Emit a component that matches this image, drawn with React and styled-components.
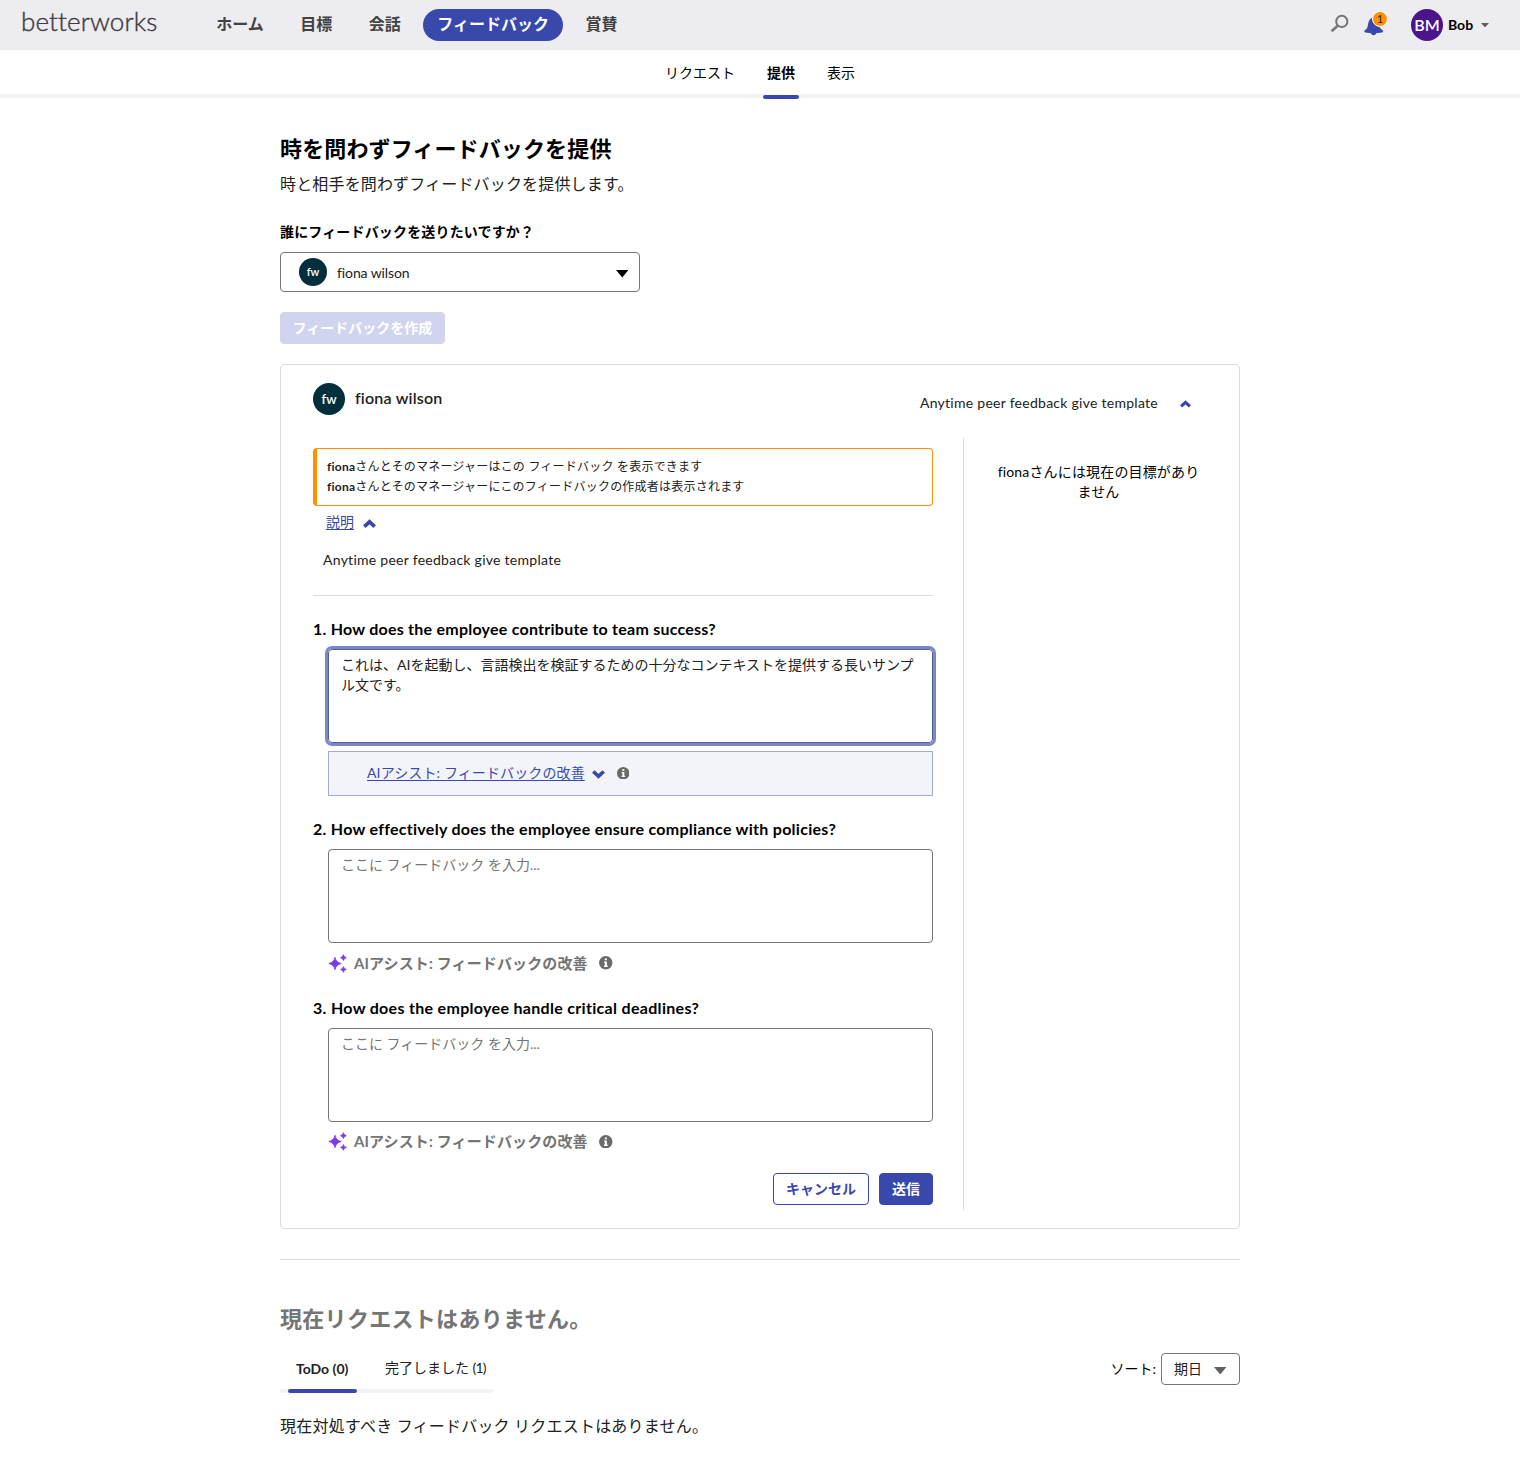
import React from "react";
import styled, { createGlobalStyle, css } from "styled-components";

const Global = createGlobalStyle`
  *, *::before, *::after { box-sizing: border-box; }
  body {
    margin: 0;
    background: #fff;
    color: #212121;
    font-family: Lato, "Noto Sans CJK JP", sans-serif;
    font-size: 14px;
    line-height: 20px;
  }
  h1, h2, p { margin: 0; }
`;

const Page = styled.div`
  display: flex;
  flex-direction: column;
  height: 1467px;
  overflow: hidden;
`;

/* ---------- header ---------- */

const Header = styled.header`
  display: flex;
  height: 50px;
  padding: 0 31px 0 21px;
  background: #edecf1;
`;

const Logo = styled.div`
  width: 181.2px;
  padding-top: 6px;
  font-size: 26px;
  line-height: 30px;
  font-weight: 300;
  letter-spacing: 0.1px;
  color: #3c3c3c;
  -webkit-text-stroke: 0.4px #3c3c3c;
`;

const Nav = styled.nav`
  display: flex;
  flex: 1;
  gap: 8.5px;
  padding-top: 9px;
`;

const NavItem = styled.a`
  height: 32px;
  padding: 0 14px;
  border-radius: 16px;
  font-size: 16px;
  line-height: 30px;
  font-weight: 700;
  color: ${(p) => (p.$active ? "#fff" : "#424242")};
  background: ${(p) => (p.$active ? "#3949ab" : "transparent")};
`;

const Tools = styled.div`
  display: flex;
  align-items: flex-start;
`;

const SearchIcon = styled.svg`
  margin: 14px 15px 0 0;
`;

const Bell = styled.div`
  position: relative;
  height: 24px;
  margin: 15px 27px 0 0;
  svg { display: block; }
`;

const Badge = styled.span`
  position: absolute;
  left: 8px;
  top: -4px;
  width: 16px;
  height: 16px;
  border: 1px solid #fff;
  border-radius: 50%;
  background: #ff9100;
  color: #212121;
  font-size: 10.5px;
  line-height: 14px;
  text-align: center;
`;

const Avatar = styled.span`
  display: block;
  flex: none;
  width: ${(p) => p.$size}px;
  height: ${(p) => p.$size}px;
  border-radius: 50%;
  background: ${(p) => p.$bg};
  color: #fff;
  font-size: ${(p) => p.$font}px;
  line-height: ${(p) => p.$size}px;
  font-weight: 600;
  text-align: center;
`;

const User = styled.div`
  display: flex;
  align-items: center;
  height: 50px;
`;

const UserName = styled.span`
  width: 38px;
  padding: 0 0 1px 5px;
  font-weight: 700;
  color: #000;
`;

const SubNav = styled.nav`
  display: flex;
  justify-content: center;
  gap: 24px;
  height: 48px;
  border-bottom: 4px solid #f4f4f4;
`;

const SubTab = styled.a`
  position: relative;
  padding: 13px 4px 0;
  color: #000;
  font-weight: ${(p) => (p.$active ? 700 : 400)};
  ${(p) =>
    p.$active &&
    css`
      &::after {
        content: "";
        position: absolute;
        left: 0;
        right: 0;
        top: 44.5px;
        height: 4px;
        border-radius: 2px;
        background: #3949ab;
      }
    `}
`;

/* ---------- intro ---------- */

const Main = styled.main`
  display: flex;
  flex-direction: column;
  width: 960px;
  margin: 0 auto;
  padding-top: 36px;
`;

const Title = styled.h1`
  font-size: 22px;
  line-height: 30px;
  letter-spacing: 0.13px;
  color: #000;
`;

const Lead = styled.p`
  margin-top: 8px;
  font-size: 16px;
  line-height: 24px;
  letter-spacing: 0.16px;
`;

const FieldLabel = styled.label`
  margin-top: 26px;
  line-height: 20px;
  font-weight: 700;
  letter-spacing: 0.16px;
  color: #000;
`;

const Person = styled.div`
  display: flex;
  align-items: center;
  width: 360px;
  height: 40px;
  margin-top: 10px;
  padding: 0 11px 0 18px;
  border: 1px solid #757575;
  border-radius: 4px;
`;

const PersonName = styled.span`
  flex: 1;
  padding: 2px 0 0 10px;
  letter-spacing: -0.1px;
`;

const Button = styled.button`
  height: 32px;
  padding: 0 ${(p) => (p.$disabled ? 11.5 : 12)}px 1px;
  border: 1px solid ${(p) => (p.$disabled ? "#d1d4ee" : "#3949ab")};
  border-radius: 4px;
  background: ${(p) => (p.$disabled ? "#d1d4ee" : p.$primary ? "#3949ab" : "#fff")};
  color: ${(p) => (p.$disabled || p.$primary ? "#fff" : "#3949ab")};
  font: inherit;
  font-weight: 700;
`;

const CreateRow = styled.div`
  display: flex;
  margin: 20px 0;
`;

/* ---------- card ---------- */

const Card = styled.section`
  height: 865px;
  border: 1px solid #dcdbe3;
  border-radius: 4px;
`;

const CardHead = styled.div`
  display: flex;
  height: 73px;
  padding: 18px 48px 0 32px;
`;

const CardName = styled.h2`
  flex: 1;
  padding: 5px 0 0 10px;
  font-size: 16px;
  line-height: 20px;
  font-weight: 600;
  letter-spacing: 0.2px;
`;

const TemplateName = styled.span`
  padding-top: 10px;
  letter-spacing: 0.27px;
`;

const HeadChevron = styled.svg`
  margin: 17px 0 0 22px;
`;

const CardBody = styled.div`
  display: flex;
  height: 772px;
  padding-left: 32px;
`;

const FormColumn = styled.div`
  display: flex;
  flex-direction: column;
  width: 620px;
  padding-top: 10px;
`;

const Goals = styled.aside`
  width: 270px;
  margin-left: 30px;
  padding: 24px 30px 0;
  border-left: 1px solid #dcdbe3;
  color: #000;
  letter-spacing: 0.16px;
  text-align: center;
`;

const Notice = styled.div`
  height: 58px;
  padding: 8px 10px;
  border: 1px solid #ff9100;
  border-left-width: 4px;
  border-radius: 4px;
  font-size: 12px;
  letter-spacing: 0.22px;
`;

const DescriptionToggle = styled.div`
  display: flex;
  align-items: center;
  gap: 9px;
  height: 20px;
  margin: 6px 0 0 13px;
  svg { margin-top: 3px; }
`;

const Link = styled.a`
  color: #3949ab;
  text-decoration: underline;
  text-underline-offset: 2px;
  text-decoration-thickness: 1px;
  letter-spacing: ${(p) => p.$ls || 0}px;
`;

const Description = styled.p`
  height: 46px;
  margin: 18px 0 23px;
  padding: 0 10px;
  border-bottom: 1px solid #dcdbe3;
  letter-spacing: 0.27px;
`;

const Question = styled.div`
  height: 20px;
  font-size: 16px;
  font-weight: 700;
  color: #000;
  letter-spacing: ${(p) => p.$ls || 0}px;
`;

const Answer = styled.div`
  height: 94px;
  margin: 10px 0 0 15px;
  padding: 5px 12px;
  border: 1px solid #757575;
  border-radius: 4px;
  color: ${(p) => (p.$filled ? "#212121" : "#757575")};
  box-shadow: ${(p) => (p.$focused ? "0 0 0 3px #7986cb" : "none")};
  border-color: ${(p) => (p.$focused ? "#5a608c" : "#757575")};
`;

const AssistPanel = styled.div`
  display: flex;
  align-items: center;
  height: 45px;
  margin: 8px 0 23px 15px;
  padding: 0 38px 1px;
  border: 1px solid #9fa8da;
  background: #f3f4f9;
`;

const PanelChevron = styled.svg`
  margin: 3px 12px 0 7px;
`;

const AssistRow = styled.div`
  display: flex;
  align-items: center;
  height: 20px;
  margin: 10px 0 ${(p) => p.$after}px 15px;
  color: #757575;
  font-size: 15px;
  font-weight: 700;
`;

const AssistLabel = styled.span`
  width: 252px;
  padding: 0 0 1px 7px;
  letter-spacing: 0.12px;
`;

const Actions = styled.div`
  display: flex;
  justify-content: flex-end;
  gap: 10px;
`;

/* ---------- requests ---------- */

const Requests = styled.section`
  margin-top: 30px;
  border-top: 1px solid #dcdbe3;
`;

const RequestsTitle = styled.h2`
  margin-top: 44px;
  font-size: 22px;
  line-height: 30px;
  letter-spacing: 0.3px;
  color: #757575;
`;

const Toolbar = styled.div`
  display: flex;
  justify-content: space-between;
  height: 40px;
  margin-top: 19px;
`;

const Tabs = styled.div`
  display: flex;
  width: 213px;
  padding-left: 8px;
  gap: 20px;
  border-bottom: 4px solid #f4f4f4;
  border-radius: 2px;
`;

const Tab = styled.a`
  position: relative;
  flex: none;
  height: 36px;
  padding: ${(p) => (p.$active ? 6 : 5)}px 8px 0;
  white-space: nowrap;
  font-weight: ${(p) => (p.$active ? 700 : 400)};
  ${(p) =>
    p.$active &&
    css`
      width: 69px;
      &::after {
        content: "";
        position: absolute;
        left: 0;
        right: 0;
        top: 36px;
        height: 4px;
        border-radius: 2px;
        background: #3949ab;
      }
    `}
`;

const Count = styled.span`
  letter-spacing: -0.9px;
`;

const Sort = styled.div`
  display: flex;
  align-items: center;
  gap: 5px;
  height: 32px;
  padding-bottom: 0;
  color: #000;
`;

const SortLabel = styled.span`
  padding-bottom: 1px;
`;

const SortSelect = styled.div`
  display: flex;
  align-items: center;
  justify-content: space-between;
  width: 79px;
  height: 32px;
  padding: 0 13px 1px 12px;
  border: 1px solid #757575;
  border-radius: 4px;
  color: #212121;
  svg { margin-top: 4px; }
`;

const EmptyText = styled.p`
  margin-top: 21px;
  font-size: 16px;
  line-height: 24px;
  letter-spacing: 0.21px;
`;

/* ---------- icons ---------- */

const CaretSvg = styled.svg`
  margin-top: ${(p) => p.$drop || 0}px;
`;

const Caret = ({ w, h, color, drop }) => (
  <CaretSvg $drop={drop} width={w} height={h} viewBox="0 0 12 7" preserveAspectRatio="none">
    <path d="M0 0H12L6 7Z" fill={color} />
  </CaretSvg>
);

const Chevron = ({ as: As = "svg", w = 12, up }) => (
  <As width={w} height={w * 0.7} viewBox="0 0 12 8.4">
    <path
      d={up ? "M1.2 7 6 2.6 10.8 7" : "M1.2 1.4 6 5.8 10.8 1.4"}
      fill="none"
      stroke="#3949ab"
      strokeWidth="3.4"
    />
  </As>
);

const Info = ({ size }) => (
  <svg width={size} height={size} viewBox="0 0 14 14">
    <circle cx="7" cy="7" r="7" fill="#6b6b6b" />
    <path d="M6 2.5h2.200v2H6zM5.200 5.700h3v4.200H9v1.400H5.200V9.900H6V7.100h-.8z" fill="#fff" />
  </svg>
);

const Sparkles = () => (
  <svg width="19" height="19" viewBox="0 0 19 19" fill="#7c3aed">
    <path d="M7 3.200Q8 8.200 13.200 9.500Q8 10.800 7 15.800Q6 10.800 .8 9.500Q6 8.200 7 3.200Z" stroke="#7c3aed" strokeWidth=".7" strokeLinejoin="round" />
    <path d="M15.400 .6Q16 3 18.500 3.700Q16 4.400 15.400 6.800Q14.800 4.400 12.300 3.700Q14.800 3 15.400 .6Z" stroke="#7c3aed" strokeWidth=".5" />
    <path d="M15.400 12.400Q16 14.700 18.500 15.400Q16 16.100 15.400 18.400Q14.800 16.100 12.300 15.400Q14.800 14.700 15.400 12.400Z" stroke="#7c3aed" strokeWidth=".5" />
  </svg>
);

const nav = ["ホーム", "目標", "会話", "フィードバック", "賞賛"];

export default function App() {
  return (
    <Page>
      <Global />
      <Header>
        <Logo>betterworks</Logo>
        <Nav>
          {nav.map((n) => (
            <NavItem key={n} $active={n === "フィードバック"}>{n}</NavItem>
          ))}
        </Nav>
        <Tools>
          <SearchIcon width="19" height="19" viewBox="0 0 19 19" fill="none" stroke="#757575">
            <circle cx="11.8" cy="7.4" r="5.6" strokeWidth="2" />
            <path d="M7.8 11.6 1.6 17.3" strokeWidth="2.6" />
          </SearchIcon>
          <Bell>
            <svg width="20" height="22" viewBox="0 0 20 22" fill="#3949ab">
              <path d="M9.5 2.4C13 2.7 15 5 15.1 8.5c.1 3.500.9 5 3.500 6.800.8.600.600 1.900-.4 2.300l-8.700.9-8.300-.9c-1-.4-1.200-1.700-.4-2.300C3.600 13.500 3.600 12 4.200 8.500 4.800 5 6.500 3 8.700 2.500z" />
              <path d="M7 17.800h5.200c0 1.400-1.100 2.500-2.600 2.500S7 19.200 7 17.800z" />
            </svg>
            <Badge>1</Badge>
          </Bell>
          <User>
            <Avatar $size={32} $bg="#4a148c" $font={16}>BM</Avatar>
            <UserName>Bob</UserName>
            <Caret w={8} h={4.5} color="#616161" />
          </User>
        </Tools>
      </Header>
      <SubNav>
        <SubTab>リクエスト</SubTab>
        <SubTab $active>提供</SubTab>
        <SubTab>表示</SubTab>
      </SubNav>

      <Main>
        <Title>時を問わずフィードバックを提供</Title>
        <Lead>時と相手を問わずフィードバックを提供します。</Lead>
        <FieldLabel>誰にフィードバックを送りたいですか？</FieldLabel>
        <Person>
          <Avatar $size={28} $bg="#032f3c" $font={11}>fw</Avatar>
          <PersonName>fiona wilson</PersonName>
          <Caret w={12.5} h={7.5} color="#000" drop={4} />
        </Person>
        <CreateRow>
          <Button $disabled>フィードバックを作成</Button>
        </CreateRow>

        <Card>
          <CardHead>
            <Avatar $size={32} $bg="#032f3c" $font={13}>fw</Avatar>
            <CardName>fiona wilson</CardName>
            <TemplateName>Anytime peer feedback give template</TemplateName>
            <Chevron as={HeadChevron} w={11} up />
          </CardHead>
          <CardBody>
            <FormColumn>
              <Notice>
                <div><b>fiona</b>さんとそのマネージャーはこの フィードバック を表示できます</div>
                <div><b>fiona</b>さんとそのマネージャーにこのフィードバックの作成者は表示されます</div>
              </Notice>
              <DescriptionToggle>
                <Link>説明</Link>
                <Chevron up w={13} />
              </DescriptionToggle>
              <Description>Anytime peer feedback give template</Description>

              <Question $ls={0.24}>1. How does the employee contribute to team success?</Question>
              <Answer $filled $focused>
                これは、AIを起動し、言語検出を検証するための十分なコンテキストを提供する長いサンプル文です。
              </Answer>
              <AssistPanel>
                <Link $ls={0.12}>AIアシスト: フィードバックの改善</Link>
                <Chevron as={PanelChevron} w={13} />
                <Info size={12.5} />
              </AssistPanel>

              <Question $ls={0.28}>2. How effectively does the employee ensure compliance with policies?</Question>
              <Answer>ここに フィードバック を入力...</Answer>
              <AssistRow $after={24.5}>
                <Sparkles />
                <AssistLabel>AIアシスト: フィードバックの改善</AssistLabel>
                <Info size={13.5} />
              </AssistRow>

              <Question $ls={0.31}>3. How does the employee handle critical deadlines?</Question>
              <Answer>ここに フィードバック を入力...</Answer>
              <AssistRow $after={21.5}>
                <Sparkles />
                <AssistLabel>AIアシスト: フィードバックの改善</AssistLabel>
                <Info size={13.5} />
              </AssistRow>

              <Actions>
                <Button>キャンセル</Button>
                <Button $primary>送信</Button>
              </Actions>
            </FormColumn>
            <Goals>fionaさんには現在の目標がありません</Goals>
          </CardBody>
        </Card>

        <Requests>
          <RequestsTitle>現在リクエストはありません。</RequestsTitle>
          <Toolbar>
            <Tabs>
              <Tab $active>ToDo (0)</Tab>
              <Tab>完了しました <Count>(1)</Count></Tab>
            </Tabs>
            <Sort>
              <SortLabel>ソート:</SortLabel>
              <SortSelect>
                期日
                <Caret w={12.5} h={7.5} color="#616161" />
              </SortSelect>
            </Sort>
          </Toolbar>
          <EmptyText>現在対処すべき フィードバック リクエストはありません。</EmptyText>
        </Requests>
      </Main>
    </Page>
  );
}
